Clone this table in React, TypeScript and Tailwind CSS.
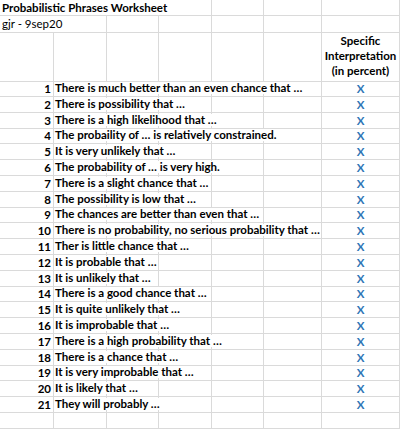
const phrases = [
  "There is much better than an even chance that …",
  "There is possibility that …",
  "There is a high likelihood that …",
  "The probaility of … is relatively constrained.",
  "It is very unlikely that …",
  "The probability of … is very high.",
  "There is a slight chance that …",
  "The possibility is low that …",
  "The chances are better than even that …",
  "There is no probability, no serious probability that …",
  "Ther is little chance that …",
  "It is probable that …",
  "It is unlikely that …",
  "There is a good chance that …",
  "It is quite unlikely that …",
  "It is improbable that …",
  "There is a high probability that …",
  "There is a chance that …",
  "It is very improbable that …",
  "It is likely that …",
  "They will probably …",
];

// rows are not all 16px in the shot (scaled sheet), a few are 15
const shortRows = [4, 9, 14, 19];

const cell = "border-r border-b border-[#dadada] min-w-0";

function Row({ h, children }: { h: string; children: React.ReactNode }) {
  return (
    <div
      className={`grid grid-cols-[54px_53px_52px_53px_52px_58px_1fr] ${h}`}
    >
      {children}
    </div>
  );
}

function Blank({ count }: { count: number }) {
  return (
    <>
      {Array.from({ length: count }).map((_, i) => (
        <div key={i} className={cell} />
      ))}
    </>
  );
}

export default function App() {
  return (
    <div className="h-[429px] w-[400px] overflow-hidden bg-white font-['Lato',sans-serif] text-[11.5px] leading-none text-black">
      <Row h="h-[16px]">
        <div className={`${cell} col-span-4 flex items-end pb-[2px] pl-[2px] font-bold`}>
          <span className="whitespace-nowrap">Probabilistic Phrases Worksheet</span>
        </div>
        <Blank count={3} />
      </Row>
      <Row h="h-[17px]">
        <div className={`${cell} col-span-2 flex items-end pb-[3px] pl-[2px]`}>
          <span className="whitespace-nowrap">gjr - 9sep20</span>
        </div>
        <Blank count={5} />
      </Row>
      <Row h="h-[48px]">
        <Blank count={6} />
        <div className={`${cell} flex items-end justify-center pb-[3px] text-center font-bold leading-[15px]`}>
          Specific
          <br />
          Interpretation
          <br />
          (in percent)
        </div>
      </Row>
      {phrases.map((text, i) => {
        const n = i + 1;
        return (
          <Row key={n} h={shortRows.includes(n) ? "h-[15px]" : "h-[16px]"}>
            <div className={`${cell} flex items-end justify-end pb-[2px] pr-[2px] font-bold`}>
              {n}
            </div>
            <div className={`${cell} relative`}>
              <span className="absolute bottom-[2px] left-[1px] z-10 whitespace-nowrap bg-white pr-[1px] font-bold leading-[12px]">
                {text}
              </span>
            </div>
            <Blank count={4} />
            <div className={`${cell} flex items-end justify-center pb-[2px] font-bold text-[#2e75b6]`}>
              X
            </div>
          </Row>
        );
      })}
      <Row h="h-[16px]">
        <Blank count={7} />
      </Row>
    </div>
  );
}
